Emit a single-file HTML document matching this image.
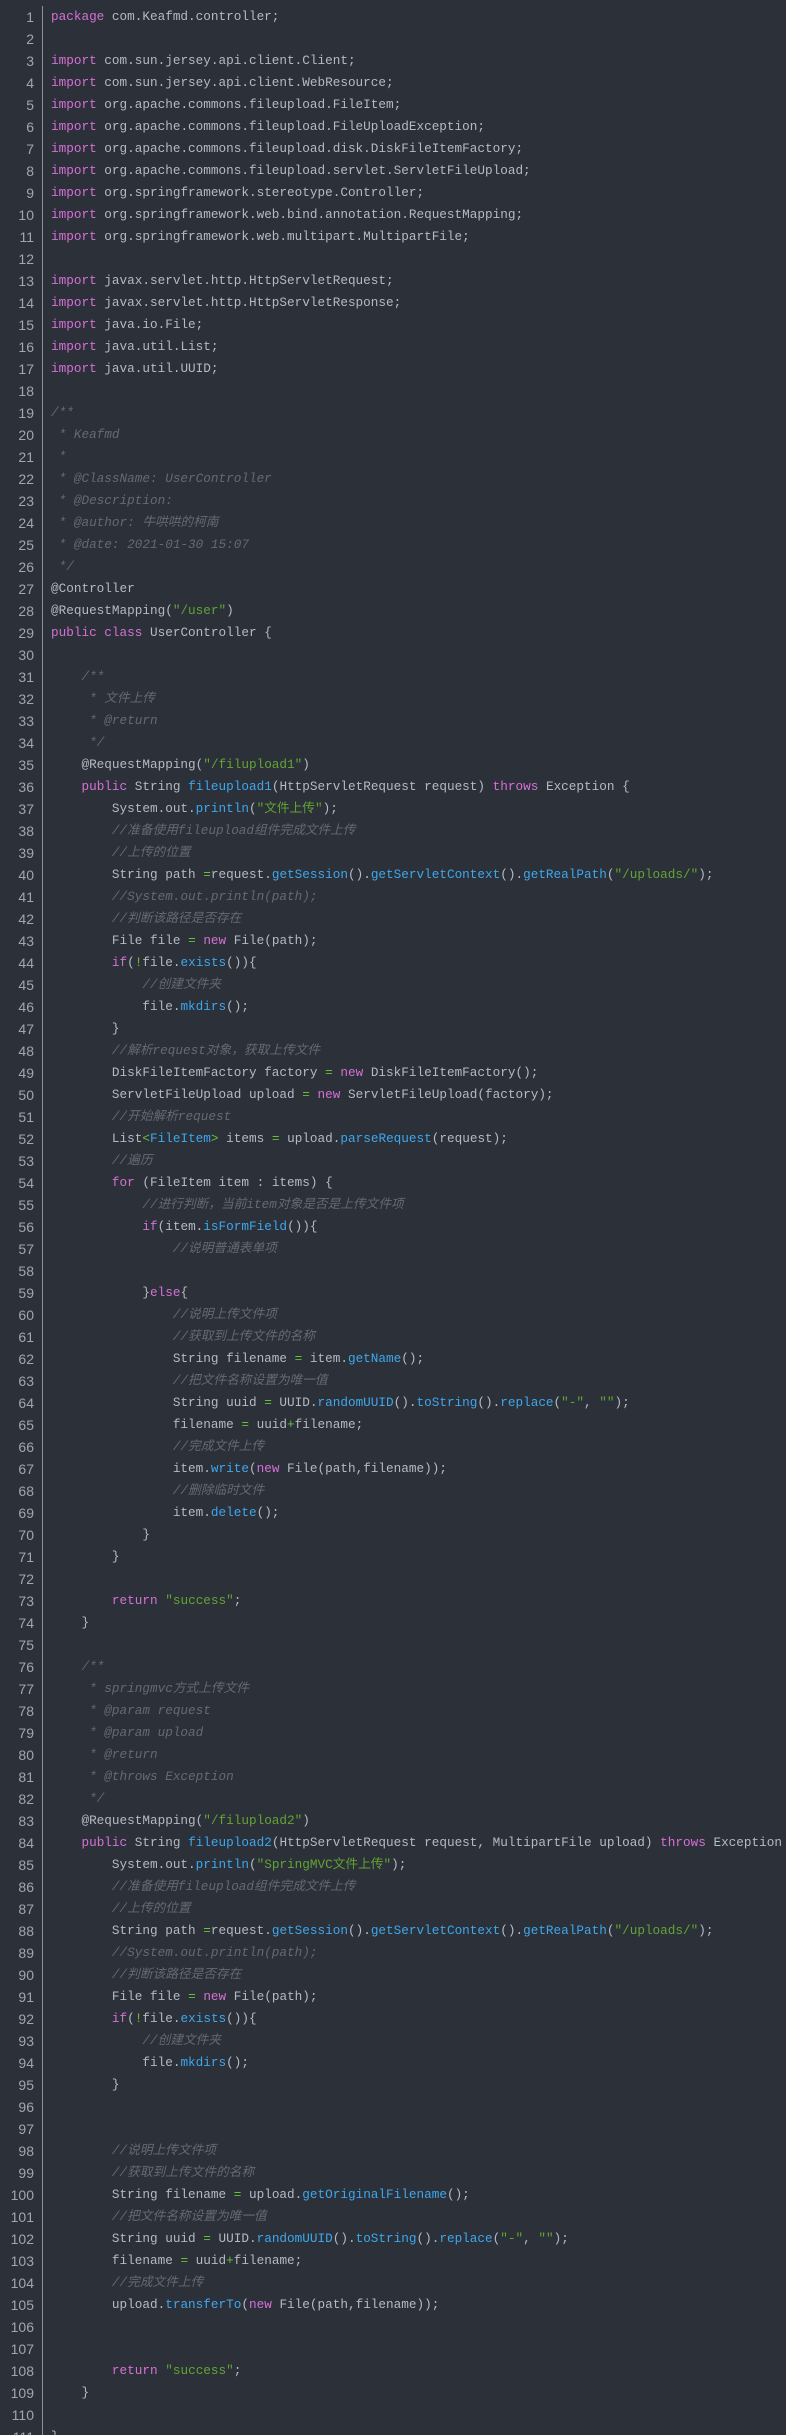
<!DOCTYPE html>
<html><head><meta charset="utf-8">
<style>
html,body{margin:0;padding:0;background:#2c3039;width:786px;height:2435px;overflow:hidden}
.wrap{position:relative;width:786px;height:2435px;overflow:hidden}
.gut{position:absolute;left:0;top:6px;width:34px;text-align:right;font:14px/22px "Liberation Sans Narrow","Liberation Sans",sans-serif;color:#a0a6b0;white-space:pre}
.bar{position:absolute;left:42px;top:6px;width:1px;height:2440px;background:#8a8f98}
pre{position:absolute;left:51px;top:6px;margin:0;font:12.7px/22px "Liberation Mono","Noto Sans CJK SC",monospace;color:#b4bac4;white-space:pre}
.k{color:#d670d6}.f{color:#3ea7ec}.s{color:#61a534}.c{color:#646a75;font-style:italic}.o{color:#6abf3a}
</style></head><body><div class="wrap">
<div class="gut">1
2
3
4
5
6
7
8
9
10
11
12
13
14
15
16
17
18
19
20
21
22
23
24
25
26
27
28
29
30
31
32
33
34
35
36
37
38
39
40
41
42
43
44
45
46
47
48
49
50
51
52
53
54
55
56
57
58
59
60
61
62
63
64
65
66
67
68
69
70
71
72
73
74
75
76
77
78
79
80
81
82
83
84
85
86
87
88
89
90
91
92
93
94
95
96
97
98
99
100
101
102
103
104
105
106
107
108
109
110
111</div>
<div class="bar"></div>
<pre><span class="k">package</span> com.Keafmd.controller;

<span class="k">import</span> com.sun.jersey.api.client.Client;
<span class="k">import</span> com.sun.jersey.api.client.WebResource;
<span class="k">import</span> org.apache.commons.fileupload.FileItem;
<span class="k">import</span> org.apache.commons.fileupload.FileUploadException;
<span class="k">import</span> org.apache.commons.fileupload.disk.DiskFileItemFactory;
<span class="k">import</span> org.apache.commons.fileupload.servlet.ServletFileUpload;
<span class="k">import</span> org.springframework.stereotype.Controller;
<span class="k">import</span> org.springframework.web.bind.annotation.RequestMapping;
<span class="k">import</span> org.springframework.web.multipart.MultipartFile;

<span class="k">import</span> javax.servlet.http.HttpServletRequest;
<span class="k">import</span> javax.servlet.http.HttpServletResponse;
<span class="k">import</span> java.io.File;
<span class="k">import</span> java.util.List;
<span class="k">import</span> java.util.UUID;

<span class="c">/**
 * Keafmd
 *
 * @ClassName: UserController
 * @Description:
 * @author: 牛哄哄的柯南
 * @date: 2021-01-30 15:07
 */</span>
@Controller
@RequestMapping(<span class="s">"/user"</span>)
<span class="k">public class</span> UserController {

    <span class="c">/**
     * 文件上传
     * @return
     */</span>
    @RequestMapping(<span class="s">"/filupload1"</span>)
    <span class="k">public</span> String <span class="f">fileupload1</span>(HttpServletRequest request) <span class="k">throws</span> Exception {
        System.out.<span class="f">println</span>(<span class="s">"文件上传"</span>);
        <span class="c">//准备使用fileupload组件完成文件上传</span>
        <span class="c">//上传的位置</span>
        String path <span class="o">=</span>request.<span class="f">getSession</span>().<span class="f">getServletContext</span>().<span class="f">getRealPath</span>(<span class="s">"/uploads/"</span>);
        <span class="c">//System.out.println(path);</span>
        <span class="c">//判断该路径是否存在</span>
        File file <span class="o">=</span> <span class="k">new</span> File(path);
        <span class="k">if</span>(<span class="o">!</span>file.<span class="f">exists</span>()){
            <span class="c">//创建文件夹</span>
            file.<span class="f">mkdirs</span>();
        }
        <span class="c">//解析request对象，获取上传文件</span>
        DiskFileItemFactory factory <span class="o">=</span> <span class="k">new</span> DiskFileItemFactory();
        ServletFileUpload upload <span class="o">=</span> <span class="k">new</span> ServletFileUpload(factory);
        <span class="c">//开始解析request</span>
        List<span class="o">&lt;</span><span class="f">FileItem</span><span class="o">&gt;</span> items <span class="o">=</span> upload.<span class="f">parseRequest</span>(request);
        <span class="c">//遍历</span>
        <span class="k">for</span> (FileItem item : items) {
            <span class="c">//进行判断，当前item对象是否是上传文件项</span>
            <span class="k">if</span>(item.<span class="f">isFormField</span>()){
                <span class="c">//说明普通表单项</span>

            }<span class="k">else</span>{
                <span class="c">//说明上传文件项</span>
                <span class="c">//获取到上传文件的名称</span>
                String filename <span class="o">=</span> item.<span class="f">getName</span>();
                <span class="c">//把文件名称设置为唯一值</span>
                String uuid <span class="o">=</span> UUID.<span class="f">randomUUID</span>().<span class="f">toString</span>().<span class="f">replace</span>(<span class="s">"-"</span>, <span class="s">""</span>);
                filename <span class="o">=</span> uuid<span class="o">+</span>filename;
                <span class="c">//完成文件上传</span>
                item.<span class="f">write</span>(<span class="k">new</span> File(path,filename));
                <span class="c">//删除临时文件</span>
                item.<span class="f">delete</span>();
            }
        }

        <span class="k">return</span> <span class="s">"success"</span>;
    }

    <span class="c">/**
     * springmvc方式上传文件
     * @param request
     * @param upload
     * @return
     * @throws Exception
     */</span>
    @RequestMapping(<span class="s">"/filupload2"</span>)
    <span class="k">public</span> String <span class="f">fileupload2</span>(HttpServletRequest request, MultipartFile upload) <span class="k">throws</span> Exception {
        System.out.<span class="f">println</span>(<span class="s">"SpringMVC文件上传"</span>);
        <span class="c">//准备使用fileupload组件完成文件上传</span>
        <span class="c">//上传的位置</span>
        String path <span class="o">=</span>request.<span class="f">getSession</span>().<span class="f">getServletContext</span>().<span class="f">getRealPath</span>(<span class="s">"/uploads/"</span>);
        <span class="c">//System.out.println(path);</span>
        <span class="c">//判断该路径是否存在</span>
        File file <span class="o">=</span> <span class="k">new</span> File(path);
        <span class="k">if</span>(<span class="o">!</span>file.<span class="f">exists</span>()){
            <span class="c">//创建文件夹</span>
            file.<span class="f">mkdirs</span>();
        }


        <span class="c">//说明上传文件项</span>
        <span class="c">//获取到上传文件的名称</span>
        String filename <span class="o">=</span> upload.<span class="f">getOriginalFilename</span>();
        <span class="c">//把文件名称设置为唯一值</span>
        String uuid <span class="o">=</span> UUID.<span class="f">randomUUID</span>().<span class="f">toString</span>().<span class="f">replace</span>(<span class="s">"-"</span>, <span class="s">""</span>);
        filename <span class="o">=</span> uuid<span class="o">+</span>filename;
        <span class="c">//完成文件上传</span>
        upload.<span class="f">transferTo</span>(<span class="k">new</span> File(path,filename));


        <span class="k">return</span> <span class="s">"success"</span>;
    }

}</pre>
</div></body></html>
